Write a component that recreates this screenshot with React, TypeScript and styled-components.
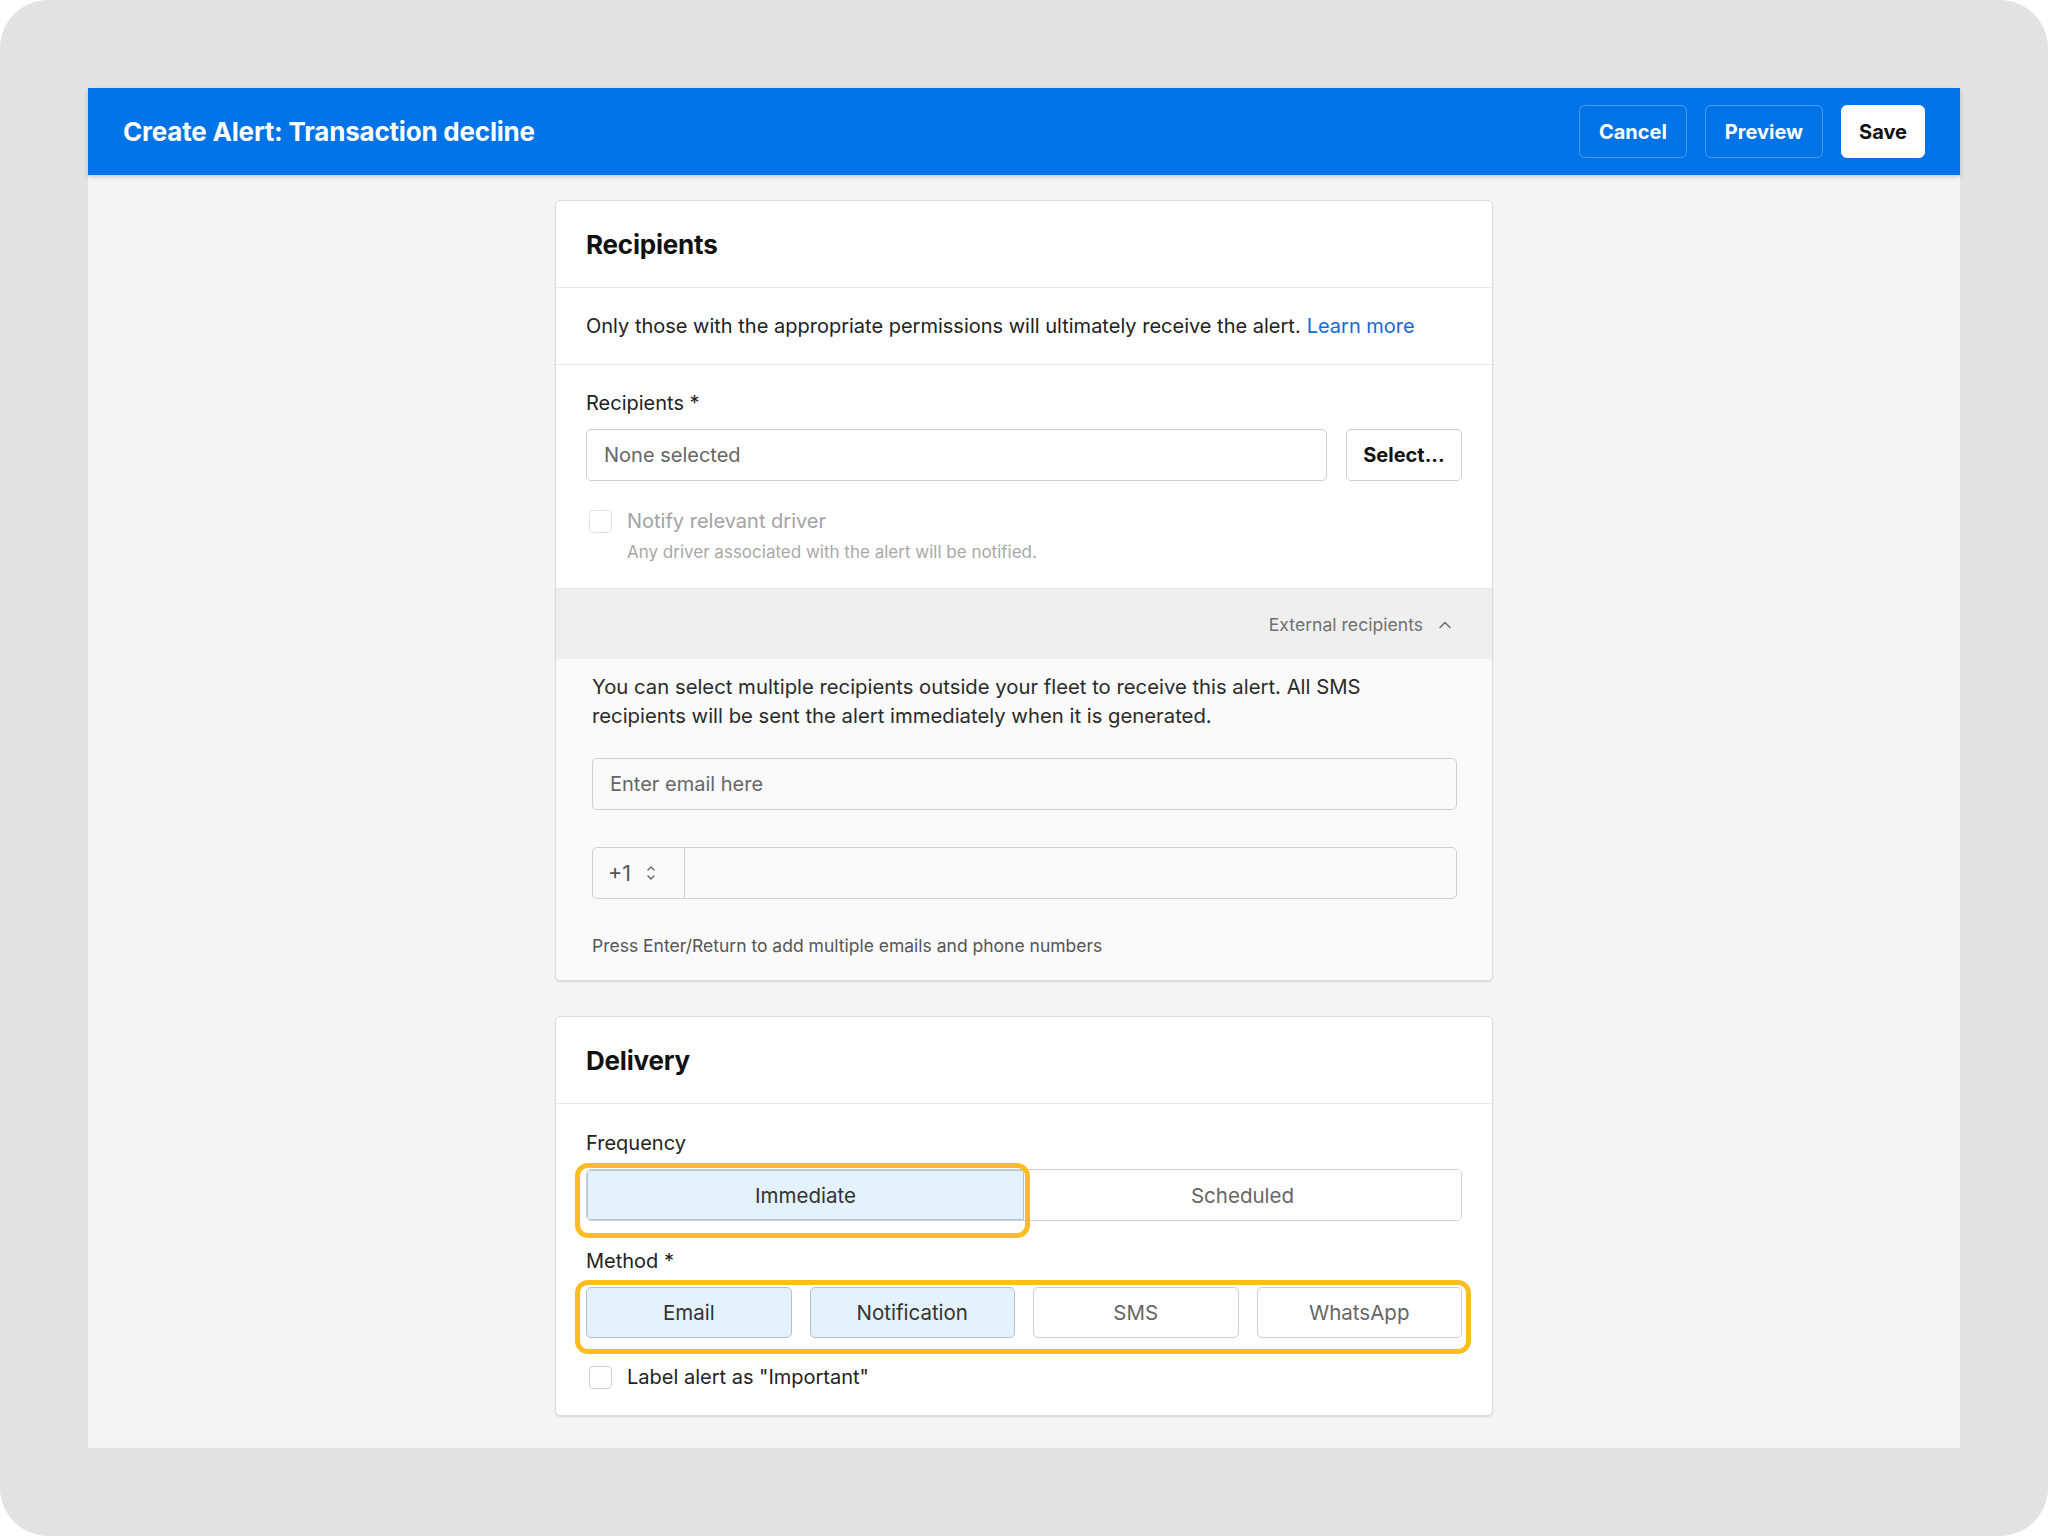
import React from 'react';
import styled, { createGlobalStyle } from 'styled-components';

const GlobalStyle = createGlobalStyle`
  html, body {
    margin: 0;
    padding: 0;
    background: #ffffff;
  }
  body {
    font-family: Inter, "Noto Sans", "Liberation Sans", sans-serif;
    color: #333;
  }
  * {
    box-sizing: border-box;
  }
`;

const Frame = styled.div`
  width: 2048px;
  height: 1536px;
  background: #e2e2e2;
  border-radius: 48px;
  padding: 88px;
`;

const Window = styled.div`
  height: 100%;
  display: flex;
  flex-direction: column;
  background: #f5f5f5;
`;

const TopBar = styled.header`
  height: 87px;
  flex-shrink: 0;
  background: #0074e6;
  display: flex;
  align-items: center;
  justify-content: space-between;
  padding: 0 35px;
  box-shadow: 0 2px 4px rgba(0, 0, 0, 0.18);
  position: relative;
  z-index: 1;
`;

const PageTitle = styled.h1`
  margin: 0;
  font-size: 26px;
  font-weight: 700;
  color: #fff;
  letter-spacing: -0.2px;
`;

const Actions = styled.div`
  display: flex;
  gap: 18px;
`;

const BarButton = styled.button<{ $primary?: boolean }>`
  height: 53px;
  padding: 0 ${p => (p.$primary ? 17 : 19)}px;
  border-radius: 6px;
  font-family: inherit;
  font-size: 20px;
  font-weight: 700;
  cursor: pointer;
  border: 1px solid ${p => (p.$primary ? '#fff' : 'rgba(255, 255, 255, 0.28)')};
  background: ${p => (p.$primary ? '#fff' : 'transparent')};
  color: ${p => (p.$primary ? '#111' : '#fff')};
`;

const Content = styled.main`
  flex: 1;
  display: flex;
  flex-direction: column;
  align-items: center;
  gap: 35px;
  padding-top: 25px;
`;

const Card = styled.section`
  width: 938px;
  background: #fff;
  border: 1px solid #dcdcdc;
  border-radius: 5px;
  box-shadow: 0 1px 2px rgba(0, 0, 0, 0.12);
  overflow: hidden;
`;

const CardHeader = styled.div`
  height: 87px;
  display: flex;
  align-items: center;
  padding: 0 30px;
  border-bottom: 1px solid #e6e6e6;
`;

const CardTitle = styled.h2`
  margin: 0;
  font-size: 26px;
  font-weight: 700;
  color: #111;
  letter-spacing: -0.2px;
`;

const Notice = styled.div`
  height: 77px;
  display: flex;
  align-items: center;
  padding: 0 30px;
  font-size: 20px;
  color: #222;
  border-bottom: 1px solid #e6e6e6;
`;

const Link = styled.a`
  color: #1769d6;
  text-decoration: none;
  margin-left: 6px;
`;

const Section = styled.div`
  padding: 24px 30px 24px;
`;

const Label = styled.div`
  font-size: 20px;
  line-height: 28px;
  color: #222;
  margin-bottom: 12px;
`;

const InputRow = styled.div`
  display: flex;
  gap: 19px;
`;

const TextBox = styled.div<{ $muted?: boolean }>`
  flex: 1;
  height: 52px;
  display: flex;
  align-items: center;
  padding: 0 17px;
  border: 1px solid #cfcfcf;
  border-radius: 5px;
  background: ${p => (p.$muted ? '#fafafa' : '#fff')};
  font-size: 20px;
  color: #666;
`;

const OutlineButton = styled.button`
  width: 116px;
  height: 52px;
  border: 1px solid #cfcfcf;
  border-radius: 5px;
  background: #fff;
  font-family: inherit;
  font-size: 20px;
  font-weight: 700;
  color: #111;
`;

const DriverOption = styled.div`
  margin-top: 26px;
`;

const CheckRow = styled.label<{ $disabled?: boolean }>`
  display: flex;
  align-items: center;
  gap: 15px;
  font-size: 20px;
  line-height: 28px;
  color: ${p => (p.$disabled ? '#a3a3a3' : '#222')};
`;

const Box = styled.span<{ $disabled?: boolean }>`
  width: 23px;
  height: 23px;
  flex-shrink: 0;
  margin-left: 3px;
  border: 1px solid ${p => (p.$disabled ? '#e2e2e2' : '#cfcfcf')};
  border-radius: 4px;
  background: #fff;
`;

const HelpText = styled.div`
  font-size: 17px;
  line-height: 23px;
  color: #a8a8a8;
  padding-left: 41px;
  margin-top: 6px;
`;

const Collapse = styled.div`
  height: 71px;
  background: #efefef;
  border-top: 1px solid #e4e4e4;
  display: flex;
  align-items: center;
  justify-content: flex-end;
  gap: 15px;
  padding-right: 40px;
  font-size: 17.6px;
  color: #707070;
`;

const External = styled.div`
  background: #fafafa;
  padding: 13px 35px 22px 36px;
`;

const Paragraph = styled.p`
  max-width: 800px;
  margin: 0 0 28px;
  font-size: 20.3px;
  line-height: 29px;
  color: #2a2a2a;
`;

const PhoneBox = styled.div`
  height: 52px;
  display: flex;
  margin-top: 37px;
  border: 1px solid #cfcfcf;
  border-radius: 5px;
  background: #fafafa;
`;

const CountryCode = styled.div`
  width: 92px;
  display: flex;
  align-items: center;
  gap: 15px;
  padding-left: 15px;
  border-right: 1px solid #cfcfcf;
  font-size: 21.5px;
  color: #555;
`;

const Hint = styled.div`
  margin-top: 35px;
  font-size: 17.5px;
  line-height: 24px;
  color: #555;
`;

const DeliveryBody = styled.div`
  padding: 25px 30px 24px;
`;

const Group = styled.div<{ $gap: number }>`
  position: relative;
  margin-bottom: ${p => p.$gap}px;
`;

const Segmented = styled.div`
  display: grid;
  grid-template-columns: 1fr 1fr;
  height: 52px;
  border: 1px solid #cfcfcf;
  border-radius: 5px;
  overflow: hidden;
`;

const Segment = styled.div<{ $selected?: boolean }>`
  display: flex;
  align-items: center;
  justify-content: center;
  font-size: 20.5px;
  color: ${p => (p.$selected ? '#333' : '#666')};
  background: ${p => (p.$selected ? '#e3f2fd' : '#fff')};
  box-shadow: ${p => (p.$selected ? 'inset 0 0 0 1px #b3c2cf' : 'none')};
`;

const ToggleGrid = styled.div`
  display: grid;
  grid-template-columns: repeat(4, 1fr);
  gap: 18px;
`;

const Toggle = styled.div<{ $selected?: boolean }>`
  height: 51px;
  display: flex;
  align-items: center;
  justify-content: center;
  border: 1px solid ${p => (p.$selected ? '#b3c2cf' : '#cfcfcf')};
  border-radius: 5px;
  font-size: 20.5px;
  color: ${p => (p.$selected ? '#333' : '#666')};
  background: ${p => (p.$selected ? '#e3f2fd' : '#fff')};
`;

// callout ring drawn over a control group
const Ring = styled.span<{ $top: number; $left: number; $right: number; $bottom: number }>`
  position: absolute;
  top: ${p => p.$top}px;
  left: ${p => p.$left}px;
  right: ${p => p.$right}px;
  bottom: ${p => p.$bottom}px;
  border: 5px solid #fcbd24;
  border-radius: 13px;
  pointer-events: none;
`;

const ChevronUp = () => (
  <svg width="14" height="9" viewBox="0 0 14 9" fill="none">
    <path d="M2 7.5L7 2.5L12 7.5" stroke="#707070" strokeWidth="1.6" strokeLinecap="round" strokeLinejoin="round" />
  </svg>
);

const UpDown = () => (
  <svg width="10" height="20" viewBox="0 0 10 20" fill="none">
    <path d="M2 7L5 4L8 7M2 13L5 16L8 13" stroke="#666" strokeWidth="1.4" strokeLinecap="round" strokeLinejoin="round" />
  </svg>
);

const methods = [
  { name: 'Email', on: true },
  { name: 'Notification', on: true },
  { name: 'SMS', on: false },
  { name: 'WhatsApp', on: false }
];

export default function App() {
  return (
    <>
      <GlobalStyle />
      <Frame>
        <Window>
          <TopBar>
            <PageTitle>Create Alert: Transaction decline</PageTitle>
            <Actions>
              <BarButton>Cancel</BarButton>
              <BarButton>Preview</BarButton>
              <BarButton $primary>Save</BarButton>
            </Actions>
          </TopBar>

          <Content>
            <Card>
              <CardHeader>
                <CardTitle>Recipients</CardTitle>
              </CardHeader>
              <Notice>
                Only those with the appropriate permissions will ultimately receive the alert.
                <Link href="#">Learn more</Link>
              </Notice>
              <Section>
                <Label>Recipients *</Label>
                <InputRow>
                  <TextBox>None selected</TextBox>
                  <OutlineButton>Select...</OutlineButton>
                </InputRow>
                <DriverOption>
                  <CheckRow $disabled>
                    <Box $disabled />
                    Notify relevant driver
                  </CheckRow>
                  <HelpText>Any driver associated with the alert will be notified.</HelpText>
                </DriverOption>
              </Section>
              <Collapse>
                External recipients
                <ChevronUp />
              </Collapse>
              <External>
                <Paragraph>
                  You can select multiple recipients outside your fleet to receive this alert. All SMS
                  recipients will be sent the alert immediately when it is generated.
                </Paragraph>
                <TextBox $muted>Enter email here</TextBox>
                <PhoneBox>
                  <CountryCode>
                    +1
                    <UpDown />
                  </CountryCode>
                </PhoneBox>
                <Hint>Press Enter/Return to add multiple emails and phone numbers</Hint>
              </External>
            </Card>

            <Card>
              <CardHeader>
                <CardTitle>Delivery</CardTitle>
              </CardHeader>
              <DeliveryBody>
                <Label>Frequency</Label>
                <Group $gap={26}>
                  <Segmented>
                    <Segment $selected>Immediate</Segment>
                    <Segment>Scheduled</Segment>
                  </Segmented>
                  <Ring $top={-6} $left={-11} $right={432} $bottom={-17} />
                </Group>
                <Label>Method *</Label>
                <Group $gap={25}>
                  <ToggleGrid>
                    {methods.map(m => (
                      <Toggle key={m.name} $selected={m.on}>
                        {m.name}
                      </Toggle>
                    ))}
                  </ToggleGrid>
                  <Ring $top={-7} $left={-11} $right={-9} $bottom={-16} />
                </Group>
                <CheckRow>
                  <Box />
                  Label alert as "Important"
                </CheckRow>
              </DeliveryBody>
            </Card>
          </Content>
        </Window>
      </Frame>
    </>
  );
}
